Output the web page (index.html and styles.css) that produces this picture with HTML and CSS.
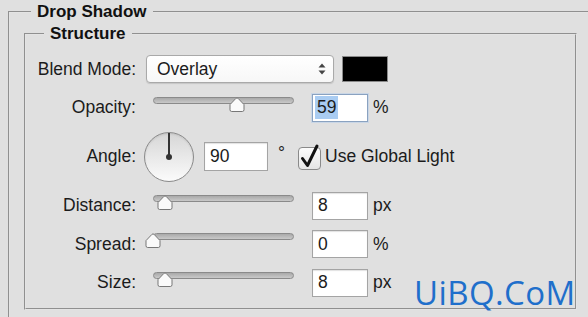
FILE: index.html
```html
<!DOCTYPE html>
<html>
<head>
<meta charset="utf-8">
<link rel="stylesheet" href="styles.css">
</head>
<body>
<fieldset class="group outer">
  <legend class="title">Drop Shadow</legend>
  <fieldset class="group inner">
    <legend class="title">Structure</legend>
    <div class="rows">
      <div class="row">
        <span class="label">Blend Mode:</span>
        <div class="select">
          <span>Overlay</span>
          <svg class="arrows" width="8" height="12" viewBox="0 0 8 12"><path d="M4 0.5 L7.5 4.5 H0.5 Z M4 11.5 L7.5 7.5 H0.5 Z" fill="#444"/></svg>
        </div>
        <div class="swatch"></div>
      </div>
      <div class="row">
        <span class="label">Opacity:</span>
        <div class="slider">
          <div class="track"></div>
          <svg class="thumb" style="left:76px" width="16" height="15" viewBox="0 0 16 15"><path d="M7 1.3 Q8 0.4 9 1.3 L15 7.6 V12.8 Q15 14.5 13.3 14.5 H2.7 Q1 14.5 1 12.8 V7.6 Z" fill="#fafafa" stroke="#777"/></svg>
        </div>
        <div class="field focus"><span class="sel">59</span></div>
        <span class="unit">%</span>
      </div>
      <div class="row tall">
        <span class="label">Angle:</span>
        <div class="dial"><div class="needle"></div><div class="hub"></div></div>
        <div class="field wide">90</div>
        <span class="deg">°</span>
        <svg class="check" width="26" height="28" viewBox="0 0 26 28"><defs><linearGradient id="cb" x1="0" y1="0" x2="0" y2="1"><stop offset="0" stop-color="#fdfdfd"/><stop offset="1" stop-color="#e4e4e4"/></linearGradient></defs><rect x="1.5" y="4.5" width="22" height="22" rx="3.5" fill="url(#cb)" stroke="#8a8a8a"/><path d="M5.5 15.5 L10.5 22.5 L20 3" fill="none" stroke="#111" stroke-width="3" stroke-linejoin="round" stroke-linecap="round"/></svg>
        <span class="checklabel">Use Global Light</span>
      </div>
      <div class="row">
        <span class="label">Distance:</span>
        <div class="slider">
          <div class="track"></div>
          <svg class="thumb" style="left:4px" width="16" height="15" viewBox="0 0 16 15"><path d="M7 1.3 Q8 0.4 9 1.3 L15 7.6 V12.8 Q15 14.5 13.3 14.5 H2.7 Q1 14.5 1 12.8 V7.6 Z" fill="#fafafa" stroke="#777"/></svg>
        </div>
        <div class="field">8</div>
        <span class="unit">px</span>
      </div>
      <div class="row">
        <span class="label">Spread:</span>
        <div class="slider">
          <div class="track"></div>
          <svg class="thumb" style="left:-8px" width="16" height="15" viewBox="0 0 16 15"><path d="M7 1.3 Q8 0.4 9 1.3 L15 7.6 V12.8 Q15 14.5 13.3 14.5 H2.7 Q1 14.5 1 12.8 V7.6 Z" fill="#fafafa" stroke="#777"/></svg>
        </div>
        <div class="field">0</div>
        <span class="unit">%</span>
      </div>
      <div class="row">
        <span class="label">Size:</span>
        <div class="slider">
          <div class="track"></div>
          <svg class="thumb" style="left:4px" width="16" height="15" viewBox="0 0 16 15"><path d="M7 1.3 Q8 0.4 9 1.3 L15 7.6 V12.8 Q15 14.5 13.3 14.5 H2.7 Q1 14.5 1 12.8 V7.6 Z" fill="#fafafa" stroke="#777"/></svg>
        </div>
        <div class="field">8</div>
        <span class="unit">px</span>
      </div>
    </div>
  </fieldset>
</fieldset>
<div class="watermark">UiBQ.CoM</div>
</body>
</html>
```

FILE: styles.css
```css
* { box-sizing: border-box; }
html, body { height: 100%; }
body {
  margin: 0;
  padding-top: 2px;
  background: #e0e0e0;
  overflow: hidden;
  font-family: "Liberation Sans", Arial, sans-serif;
  font-size: 17.5px;
  color: #1b1b1b;
  position: relative;
}
.group {
  border: 2px groove #e4e4e4;
  margin: 0;
  min-width: 0;
}
.outer {
  margin-left: 8px;
  width: 620px;
  height: 360px;
  padding: 0 0 0 14px;
}
.inner {
  margin-top: 2px;
  width: 553px;
  padding: 11px 0 11px 0;
}
.title {
  font-weight: bold;
  font-size: 17px;
  line-height: 20px;
  padding: 0 6px;
  color: #111;
}
.outer > .title { margin-left: 7px; }
.inner > .title { margin-left: 18px; }
.rows {
  display: flex;
  flex-direction: column;
  gap: 10.5px;
}
.row {
  display: flex;
  align-items: center;
  height: 28px;
}
.row.tall { height: 49px; }
.label {
  width: 110px;
  margin-right: 10px;
  text-align: right;
  white-space: nowrap;
}
.select {
  width: 188px;
  height: 28px;
  border: 1px solid #a9a9a9;
  border-radius: 4px;
  background: linear-gradient(#ffffff, #f7f7f7);
  box-shadow: 0 1px 1px rgba(0,0,0,0.12);
  display: flex;
  align-items: center;
  justify-content: space-between;
  padding: 0 7px 0 10px;
}
.swatch {
  width: 46px;
  height: 26px;
  margin-left: 8px;
  background: #000;
  border: 1px solid #8a8a8a;
}
.slider {
  position: relative;
  align-self: flex-start;
  width: 141px;
  height: 28px;
  margin-left: 7px;
}
.track {
  margin-top: 3px;
  height: 7px;
  border: 1px solid #8a8a8a;
  border-radius: 4px;
  background: linear-gradient(#a9a9a9, #c9c9c9);
}
.thumb {
  position: absolute;
  top: 3px;
}
.field {
  width: 56px;
  height: 28px;
  margin-left: 18px;
  background: #fff;
  border: 1px solid #a4a4a4;
  box-shadow: inset 0 1px 1px rgba(0,0,0,0.12);
  padding-left: 5px;
  display: flex;
  align-items: center;
}
.field.focus {
  border-color: #8aa2c0;
  box-shadow: 0 0 0 1px #c9d6e6;
  padding-left: 2px;
}
.sel {
  background: #a9ccf2;
  padding: 1px 2px;
  line-height: 21px;
}
.field.wide {
  width: 64px;
  height: 29px;
  margin-left: 10px;
}
.unit { margin-left: 5px; }
.dial {
  position: relative;
  width: 50px;
  height: 50px;
  margin-left: -2px;
  border-radius: 50%;
  border: 1px solid #8a8a8a;
  background: linear-gradient(#d6d6d6, #fbfbfb);
  box-shadow: inset 0 1px 2px rgba(0,0,0,0.1);
}
.needle {
  position: absolute;
  left: 23px;
  top: 0;
  width: 2px;
  height: 24px;
  background: #333;
}
.hub {
  position: absolute;
  left: 21px;
  top: 21px;
  width: 6px;
  height: 6px;
  border-radius: 50%;
  background: #333;
}
.deg {
  margin-left: 10px;
  align-self: flex-start;
  margin-top: 11px;
}
.check { margin-left: 12px; }
.checklabel { margin-left: 2px; white-space: nowrap; }
.watermark {
  position: absolute;
  left: 414px;
  top: 276px;
  font-family: "Open Sans", sans-serif;
  font-size: 33px;
  line-height: 33px;
  letter-spacing: 0.4px;
  color: #1f6fcb;
}
```
